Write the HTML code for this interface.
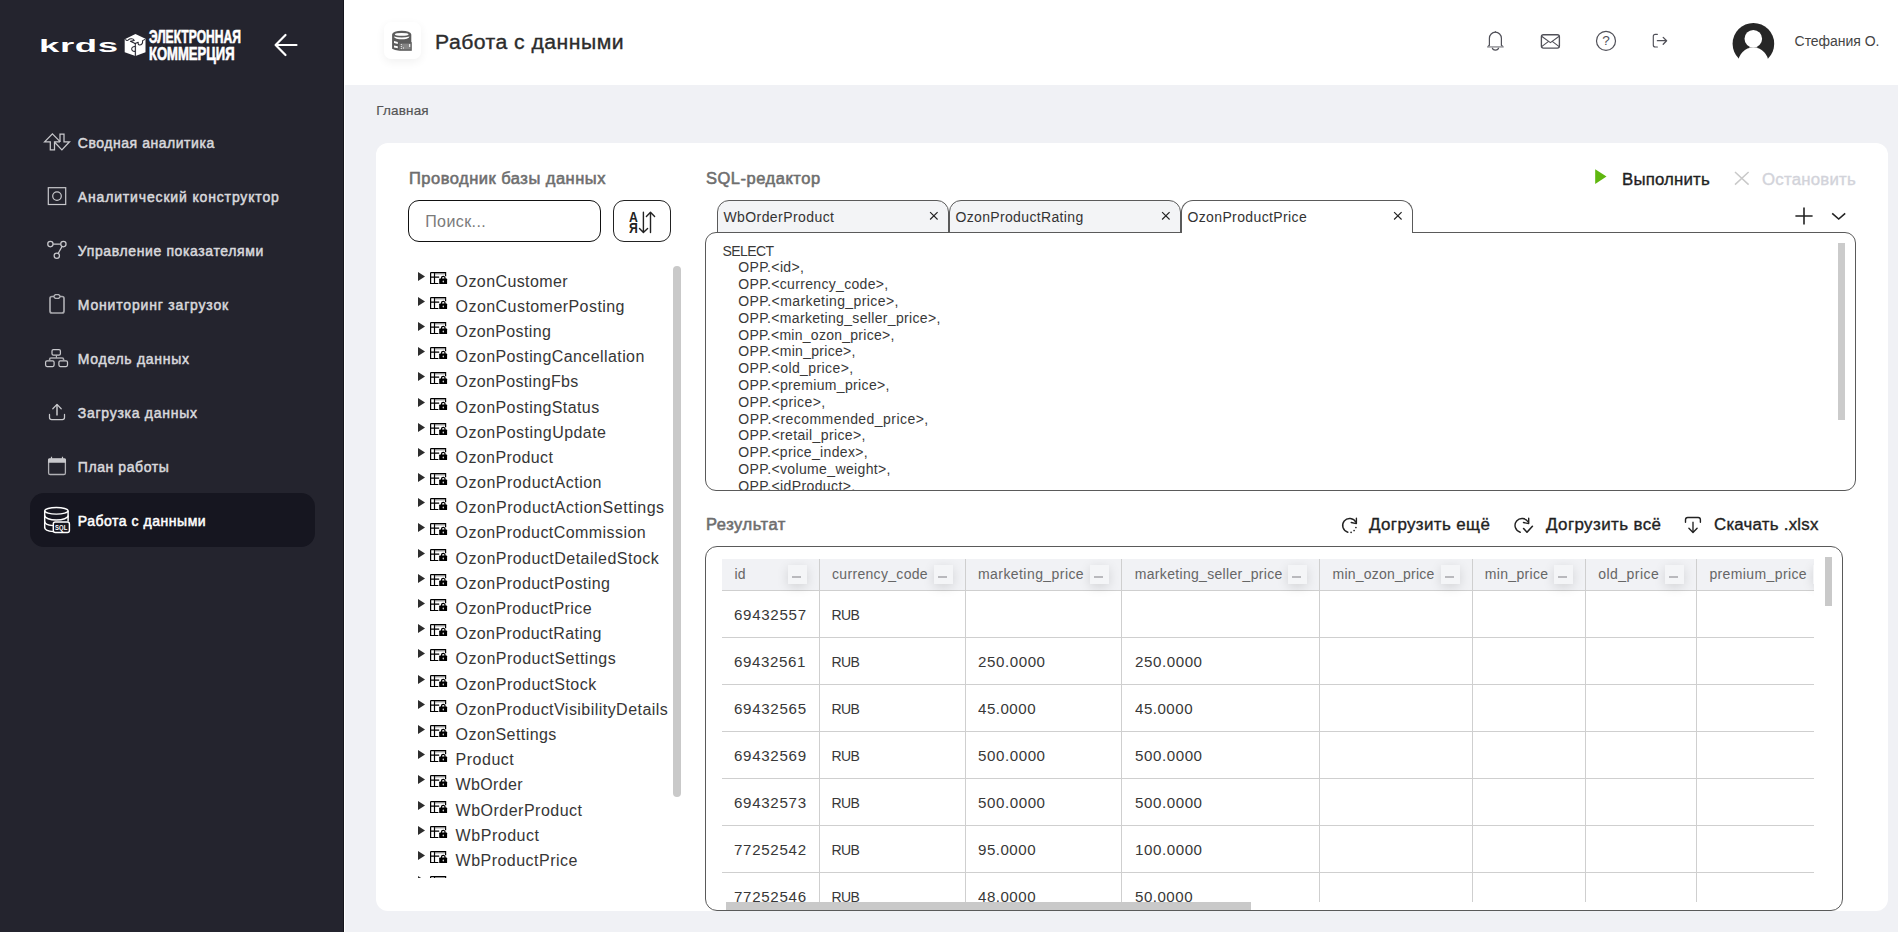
<!DOCTYPE html>
<html lang="ru"><head><meta charset="utf-8"><title>Работа с данными</title>
<style>
html,body{margin:0;padding:0;}
body{width:1898px;height:932px;overflow:hidden;position:relative;background:#f0f1f5;font-family:"Liberation Sans",sans-serif;}
.b{position:absolute;display:block;}
.t{position:absolute;white-space:pre;font-family:"Liberation Sans",sans-serif;}
</style></head>
<body>
<div class="b" style="left:344px;top:0px;width:1554px;height:85px;background:#fff;"></div>
<div class="b" style="left:384px;top:22px;width:36.5px;height:37px;background:#fff;border-radius:7px;box-shadow:0 3px 10px rgba(0,0,0,0.06);"></div>
<svg class="b" style="left:390px;top:29px;" width="24" height="24" viewBox="390 29 24 24"><path d="M392.1 34.4 A9.6 3.6 0 0 1 411.3 34.4 V43 H399.4 V50.7 Q394.4 50.4 392.1 48.7 Z" fill="#5c5c5c"/><ellipse cx="401.7" cy="34.4" rx="6.9" ry="1.45" fill="#fff"/><path d="M393.9 36.5 Q401.7 38.6 409.5 36.5 Q409.4 38 406.8 38.7 Q401.7 39.8 396.6 38.7 Q394 38 393.9 36.5Z" fill="#fff"/><path d="M394 41.1 L397.8 41.9 V43.9 L394 43.1Z M394 45.5 L397.8 46.3 V48.3 L394 47.5Z" fill="#fff"/><rect x="399.2" y="42.2" width="12.6" height="8.6" fill="#5c5c5c"/><rect x="400.6" y="43.6" width="10" height="5.8" fill="#858585"/><path d="M400.8 44 h0.9 v1 h-0.9z M400.8 46 h0.9 v1 h-0.9z M400.8 48 h0.9 v1 h-0.9z M409.2 44 h1 v3 h-1z M403 47.6 h1 v1 h-1z" fill="#fff"/></svg>
<span class="t" style="left:434.90px;top:28.67px;font-size:20px;line-height:26px;color:#2c2c2c;letter-spacing:0.439px;-webkit-text-stroke:0.35px #2c2c2c;transform-origin:0 50%;transform:scaleX(1.06);">Работа с данными</span>
<svg class="b" style="left:1484px;top:28px;" width="24" height="26" viewBox="1484 28 24 26"><g stroke="#505058" stroke-width="1.2" fill="none" stroke-linejoin="round"><path d="M1489.4 45.8 V38.2 A6 6 0 0 1 1501.4 38.2 V45.8"/><path d="M1489.4 45.2 L1487.9 46.6 M1501.4 45.2 L1502.9 46.6"/><path d="M1492.2 47.6 A3.3 3.1 0 0 0 1498.7 47.6"/><path d="M1495.4 32.4 V31.2" stroke-width="1.1"/></g><path d="M1487.1 46.2 H1503.7 V47.6 H1487.1Z" fill="#8e8e93"/></svg>
<svg class="b" style="left:1538px;top:31px;" width="25" height="21" viewBox="1538 31 25 21"><g stroke="#505058" stroke-width="1.35" fill="none" stroke-linejoin="round"><rect x="1541.4" y="34.7" width="18" height="13.4" rx="2"/><path d="M1541.6 36.2 L1550.4 42.6 L1559.2 36.2 M1541.6 46.6 L1548.6 41.4 M1559.2 46.6 L1552.2 41.4" stroke-width="1.15"/></g></svg>
<svg class="b" style="left:1594px;top:29px;" width="24" height="24" viewBox="1594 29 24 24"><circle cx="1606" cy="40.9" r="9.5" stroke="#505058" stroke-width="1.2" fill="none"/><text x="1606.1" y="45.3" font-family="Liberation Sans, sans-serif" font-size="13.6" fill="#505058" text-anchor="middle">?</text></svg>
<svg class="b" style="left:1650px;top:31px;" width="20" height="20" viewBox="1650 31 20 20"><g stroke="#505058" stroke-width="1.15" fill="none" stroke-linecap="round" stroke-linejoin="round"><path d="M1657.4 34.3 H1655.3 Q1653.3 34.3 1653.3 36.3 V45 Q1653.3 47 1655.3 47 H1657.4"/><path d="M1657.4 40.7 H1666.4 M1663.2 37.4 L1666.6 40.7 L1663.2 44.2" stroke-width="1.3"/></g></svg>
<svg class="b" style="left:1730px;top:20px;" width="48" height="60" viewBox="1730 20 48 60"><circle cx="1753.4" cy="43.7" r="20.8" fill="#262626"/><circle cx="1753.3" cy="38.7" r="8.8" fill="#fff"/><circle cx="1753.3" cy="62.6" r="15.1" fill="#fff"/><path d="M1749.6 47.4 H1757 L1757.8 47.9 H1748.8Z" fill="#fff"/></svg>
<span class="t" style="left:1794.60px;top:31.75px;font-size:14px;line-height:18px;color:#444;letter-spacing:-0.045px;">Стефания О.</span>
<div class="b" style="left:344px;top:85px;width:1554px;height:847px;background:#f0f1f5;"></div>
<span class="t" style="left:376.30px;top:101.52px;font-size:13.5px;line-height:18px;color:#555;letter-spacing:0.162px;-webkit-text-stroke:0.2px #555;">Главная</span>
<div class="b" style="left:376px;top:143px;width:1512px;height:768.4px;background:#fff;border-radius:12px;"></div>
<span class="t" style="left:408.60px;top:167.66px;font-size:16px;line-height:21px;color:#6e6e6e;letter-spacing:0.488px;-webkit-text-stroke:0.55px #6e6e6e;transform-origin:0 50%;transform:scaleX(1.03);">Проводник базы данных</span>
<div class="b" style="left:408px;top:200px;width:193px;height:42px;box-sizing:border-box;border:1.5px solid #111;border-radius:11px;background:#fff;"></div>
<span class="t" style="left:425.20px;top:210.66px;font-size:16px;line-height:21px;color:#7a7a7a;letter-spacing:0.410px;">Поиск...</span>
<div class="b" style="left:613px;top:200px;width:58px;height:42px;box-sizing:border-box;border:1px solid #222;border-radius:11px;background:#fff;"></div>
<span class="t" style="left:628.9px;top:208.5px;font-size:14.8px;line-height:16px;font-weight:700;color:#222;transform-origin:0 50%;transform:scaleX(0.83);">А</span>
<span class="t" style="left:628.6px;top:219.8px;font-size:14.8px;line-height:16px;font-weight:700;color:#222;transform-origin:0 50%;transform:scaleX(0.83);">Я</span>
<svg class="b" style="left:636px;top:208px;" width="22" height="28" viewBox="636 208 22 28"><g stroke="#222" stroke-width="1.4" fill="none" stroke-linecap="round" stroke-linejoin="round"><path d="M643.4 212.3 V232.4 M639.5 228.4 L643.4 232.5 L647.6 228.4"/><path d="M650.5 232.5 V212.4 M646.4 216.4 L650.5 212.2 L654.6 216.4"/></g></svg>
<div class="b" style="left:408px;top:262px;width:280px;height:616px;overflow:hidden;">
<svg class="b" style="left:9.899999999999977px;top:10px;" width="8" height="10" viewBox="0 0 8 10"><path d="M0 0 L7 4.45 L0 9 Z" fill="#2d2d2d"/></svg>
<svg class="b" style="left:21.899999999999977px;top:10px;" width="18" height="13" viewBox="0 0 18 13"><g fill="none" stroke="#000" stroke-width="1.2"><path d="M0.6 0.6 H15.6 V4.2 M0.6 0.6 V11.5 H8.4 M4.5 0.6 V11.5 M0.6 5.2 H9.2"/><path d="M4.5 1.9 H15.6" stroke-width="0.6" stroke="#444"/><path d="M11.5 7 V6.1 A1.75 1.75 0 0 1 15 6.1 V7" stroke-width="1.25"/></g><rect x="9.2" y="6.5" width="7.9" height="5.6" rx="0.7" fill="#000"/><rect x="12.65" y="8.5" width="1.2" height="1.9" rx="0.6" fill="#fff"/></svg>
<span class="t" style="left:47.60px;top:8.86px;font-size:16px;line-height:21px;color:#363636;letter-spacing:0.405px;">OzonCustomer</span>
<svg class="b" style="left:9.899999999999977px;top:35px;" width="8" height="10" viewBox="0 0 8 10"><path d="M0 0 L7 4.45 L0 9 Z" fill="#2d2d2d"/></svg>
<svg class="b" style="left:21.899999999999977px;top:35px;" width="18" height="13" viewBox="0 0 18 13"><g fill="none" stroke="#000" stroke-width="1.2"><path d="M0.6 0.6 H15.6 V4.2 M0.6 0.6 V11.5 H8.4 M4.5 0.6 V11.5 M0.6 5.2 H9.2"/><path d="M4.5 1.9 H15.6" stroke-width="0.6" stroke="#444"/><path d="M11.5 7 V6.1 A1.75 1.75 0 0 1 15 6.1 V7" stroke-width="1.25"/></g><rect x="9.2" y="6.5" width="7.9" height="5.6" rx="0.7" fill="#000"/><rect x="12.65" y="8.5" width="1.2" height="1.9" rx="0.6" fill="#fff"/></svg>
<span class="t" style="left:47.60px;top:33.86px;font-size:16px;line-height:21px;color:#363636;letter-spacing:0.442px;">OzonCustomerPosting</span>
<svg class="b" style="left:9.899999999999977px;top:60px;" width="8" height="10" viewBox="0 0 8 10"><path d="M0 0 L7 4.45 L0 9 Z" fill="#2d2d2d"/></svg>
<svg class="b" style="left:21.899999999999977px;top:60px;" width="18" height="13" viewBox="0 0 18 13"><g fill="none" stroke="#000" stroke-width="1.2"><path d="M0.6 0.6 H15.6 V4.2 M0.6 0.6 V11.5 H8.4 M4.5 0.6 V11.5 M0.6 5.2 H9.2"/><path d="M4.5 1.9 H15.6" stroke-width="0.6" stroke="#444"/><path d="M11.5 7 V6.1 A1.75 1.75 0 0 1 15 6.1 V7" stroke-width="1.25"/></g><rect x="9.2" y="6.5" width="7.9" height="5.6" rx="0.7" fill="#000"/><rect x="12.65" y="8.5" width="1.2" height="1.9" rx="0.6" fill="#fff"/></svg>
<span class="t" style="left:47.60px;top:58.86px;font-size:16px;line-height:21px;color:#363636;letter-spacing:0.361px;">OzonPosting</span>
<svg class="b" style="left:9.899999999999977px;top:85px;" width="8" height="10" viewBox="0 0 8 10"><path d="M0 0 L7 4.45 L0 9 Z" fill="#2d2d2d"/></svg>
<svg class="b" style="left:21.899999999999977px;top:85px;" width="18" height="13" viewBox="0 0 18 13"><g fill="none" stroke="#000" stroke-width="1.2"><path d="M0.6 0.6 H15.6 V4.2 M0.6 0.6 V11.5 H8.4 M4.5 0.6 V11.5 M0.6 5.2 H9.2"/><path d="M4.5 1.9 H15.6" stroke-width="0.6" stroke="#444"/><path d="M11.5 7 V6.1 A1.75 1.75 0 0 1 15 6.1 V7" stroke-width="1.25"/></g><rect x="9.2" y="6.5" width="7.9" height="5.6" rx="0.7" fill="#000"/><rect x="12.65" y="8.5" width="1.2" height="1.9" rx="0.6" fill="#fff"/></svg>
<span class="t" style="left:47.60px;top:83.86px;font-size:16px;line-height:21px;color:#363636;letter-spacing:0.411px;">OzonPostingCancellation</span>
<svg class="b" style="left:9.899999999999977px;top:110px;" width="8" height="10" viewBox="0 0 8 10"><path d="M0 0 L7 4.45 L0 9 Z" fill="#2d2d2d"/></svg>
<svg class="b" style="left:21.899999999999977px;top:110px;" width="18" height="13" viewBox="0 0 18 13"><g fill="none" stroke="#000" stroke-width="1.2"><path d="M0.6 0.6 H15.6 V4.2 M0.6 0.6 V11.5 H8.4 M4.5 0.6 V11.5 M0.6 5.2 H9.2"/><path d="M4.5 1.9 H15.6" stroke-width="0.6" stroke="#444"/><path d="M11.5 7 V6.1 A1.75 1.75 0 0 1 15 6.1 V7" stroke-width="1.25"/></g><rect x="9.2" y="6.5" width="7.9" height="5.6" rx="0.7" fill="#000"/><rect x="12.65" y="8.5" width="1.2" height="1.9" rx="0.6" fill="#fff"/></svg>
<span class="t" style="left:47.60px;top:108.86px;font-size:16px;line-height:21px;color:#363636;letter-spacing:0.340px;">OzonPostingFbs</span>
<svg class="b" style="left:9.899999999999977px;top:136px;" width="8" height="10" viewBox="0 0 8 10"><path d="M0 0 L7 4.45 L0 9 Z" fill="#2d2d2d"/></svg>
<svg class="b" style="left:21.899999999999977px;top:136px;" width="18" height="13" viewBox="0 0 18 13"><g fill="none" stroke="#000" stroke-width="1.2"><path d="M0.6 0.6 H15.6 V4.2 M0.6 0.6 V11.5 H8.4 M4.5 0.6 V11.5 M0.6 5.2 H9.2"/><path d="M4.5 1.9 H15.6" stroke-width="0.6" stroke="#444"/><path d="M11.5 7 V6.1 A1.75 1.75 0 0 1 15 6.1 V7" stroke-width="1.25"/></g><rect x="9.2" y="6.5" width="7.9" height="5.6" rx="0.7" fill="#000"/><rect x="12.65" y="8.5" width="1.2" height="1.9" rx="0.6" fill="#fff"/></svg>
<span class="t" style="left:47.60px;top:134.86px;font-size:16px;line-height:21px;color:#363636;letter-spacing:0.414px;">OzonPostingStatus</span>
<svg class="b" style="left:9.899999999999977px;top:161px;" width="8" height="10" viewBox="0 0 8 10"><path d="M0 0 L7 4.45 L0 9 Z" fill="#2d2d2d"/></svg>
<svg class="b" style="left:21.899999999999977px;top:161px;" width="18" height="13" viewBox="0 0 18 13"><g fill="none" stroke="#000" stroke-width="1.2"><path d="M0.6 0.6 H15.6 V4.2 M0.6 0.6 V11.5 H8.4 M4.5 0.6 V11.5 M0.6 5.2 H9.2"/><path d="M4.5 1.9 H15.6" stroke-width="0.6" stroke="#444"/><path d="M11.5 7 V6.1 A1.75 1.75 0 0 1 15 6.1 V7" stroke-width="1.25"/></g><rect x="9.2" y="6.5" width="7.9" height="5.6" rx="0.7" fill="#000"/><rect x="12.65" y="8.5" width="1.2" height="1.9" rx="0.6" fill="#fff"/></svg>
<span class="t" style="left:47.60px;top:159.86px;font-size:16px;line-height:21px;color:#363636;letter-spacing:0.451px;">OzonPostingUpdate</span>
<svg class="b" style="left:9.899999999999977px;top:186px;" width="8" height="10" viewBox="0 0 8 10"><path d="M0 0 L7 4.45 L0 9 Z" fill="#2d2d2d"/></svg>
<svg class="b" style="left:21.899999999999977px;top:186px;" width="18" height="13" viewBox="0 0 18 13"><g fill="none" stroke="#000" stroke-width="1.2"><path d="M0.6 0.6 H15.6 V4.2 M0.6 0.6 V11.5 H8.4 M4.5 0.6 V11.5 M0.6 5.2 H9.2"/><path d="M4.5 1.9 H15.6" stroke-width="0.6" stroke="#444"/><path d="M11.5 7 V6.1 A1.75 1.75 0 0 1 15 6.1 V7" stroke-width="1.25"/></g><rect x="9.2" y="6.5" width="7.9" height="5.6" rx="0.7" fill="#000"/><rect x="12.65" y="8.5" width="1.2" height="1.9" rx="0.6" fill="#fff"/></svg>
<span class="t" style="left:47.60px;top:184.86px;font-size:16px;line-height:21px;color:#363636;letter-spacing:0.395px;">OzonProduct</span>
<svg class="b" style="left:9.899999999999977px;top:211px;" width="8" height="10" viewBox="0 0 8 10"><path d="M0 0 L7 4.45 L0 9 Z" fill="#2d2d2d"/></svg>
<svg class="b" style="left:21.899999999999977px;top:211px;" width="18" height="13" viewBox="0 0 18 13"><g fill="none" stroke="#000" stroke-width="1.2"><path d="M0.6 0.6 H15.6 V4.2 M0.6 0.6 V11.5 H8.4 M4.5 0.6 V11.5 M0.6 5.2 H9.2"/><path d="M4.5 1.9 H15.6" stroke-width="0.6" stroke="#444"/><path d="M11.5 7 V6.1 A1.75 1.75 0 0 1 15 6.1 V7" stroke-width="1.25"/></g><rect x="9.2" y="6.5" width="7.9" height="5.6" rx="0.7" fill="#000"/><rect x="12.65" y="8.5" width="1.2" height="1.9" rx="0.6" fill="#fff"/></svg>
<span class="t" style="left:47.60px;top:209.86px;font-size:16px;line-height:21px;color:#363636;letter-spacing:0.504px;">OzonProductAction</span>
<svg class="b" style="left:9.899999999999977px;top:236px;" width="8" height="10" viewBox="0 0 8 10"><path d="M0 0 L7 4.45 L0 9 Z" fill="#2d2d2d"/></svg>
<svg class="b" style="left:21.899999999999977px;top:236px;" width="18" height="13" viewBox="0 0 18 13"><g fill="none" stroke="#000" stroke-width="1.2"><path d="M0.6 0.6 H15.6 V4.2 M0.6 0.6 V11.5 H8.4 M4.5 0.6 V11.5 M0.6 5.2 H9.2"/><path d="M4.5 1.9 H15.6" stroke-width="0.6" stroke="#444"/><path d="M11.5 7 V6.1 A1.75 1.75 0 0 1 15 6.1 V7" stroke-width="1.25"/></g><rect x="9.2" y="6.5" width="7.9" height="5.6" rx="0.7" fill="#000"/><rect x="12.65" y="8.5" width="1.2" height="1.9" rx="0.6" fill="#fff"/></svg>
<span class="t" style="left:47.60px;top:234.86px;font-size:16px;line-height:21px;color:#363636;letter-spacing:0.535px;">OzonProductActionSettings</span>
<svg class="b" style="left:9.899999999999977px;top:261px;" width="8" height="10" viewBox="0 0 8 10"><path d="M0 0 L7 4.45 L0 9 Z" fill="#2d2d2d"/></svg>
<svg class="b" style="left:21.899999999999977px;top:261px;" width="18" height="13" viewBox="0 0 18 13"><g fill="none" stroke="#000" stroke-width="1.2"><path d="M0.6 0.6 H15.6 V4.2 M0.6 0.6 V11.5 H8.4 M4.5 0.6 V11.5 M0.6 5.2 H9.2"/><path d="M4.5 1.9 H15.6" stroke-width="0.6" stroke="#444"/><path d="M11.5 7 V6.1 A1.75 1.75 0 0 1 15 6.1 V7" stroke-width="1.25"/></g><rect x="9.2" y="6.5" width="7.9" height="5.6" rx="0.7" fill="#000"/><rect x="12.65" y="8.5" width="1.2" height="1.9" rx="0.6" fill="#fff"/></svg>
<span class="t" style="left:47.60px;top:259.86px;font-size:16px;line-height:21px;color:#363636;letter-spacing:0.431px;">OzonProductCommission</span>
<svg class="b" style="left:9.899999999999977px;top:287px;" width="8" height="10" viewBox="0 0 8 10"><path d="M0 0 L7 4.45 L0 9 Z" fill="#2d2d2d"/></svg>
<svg class="b" style="left:21.899999999999977px;top:287px;" width="18" height="13" viewBox="0 0 18 13"><g fill="none" stroke="#000" stroke-width="1.2"><path d="M0.6 0.6 H15.6 V4.2 M0.6 0.6 V11.5 H8.4 M4.5 0.6 V11.5 M0.6 5.2 H9.2"/><path d="M4.5 1.9 H15.6" stroke-width="0.6" stroke="#444"/><path d="M11.5 7 V6.1 A1.75 1.75 0 0 1 15 6.1 V7" stroke-width="1.25"/></g><rect x="9.2" y="6.5" width="7.9" height="5.6" rx="0.7" fill="#000"/><rect x="12.65" y="8.5" width="1.2" height="1.9" rx="0.6" fill="#fff"/></svg>
<span class="t" style="left:47.60px;top:285.86px;font-size:16px;line-height:21px;color:#363636;letter-spacing:0.481px;">OzonProductDetailedStock</span>
<svg class="b" style="left:9.899999999999977px;top:312px;" width="8" height="10" viewBox="0 0 8 10"><path d="M0 0 L7 4.45 L0 9 Z" fill="#2d2d2d"/></svg>
<svg class="b" style="left:21.899999999999977px;top:312px;" width="18" height="13" viewBox="0 0 18 13"><g fill="none" stroke="#000" stroke-width="1.2"><path d="M0.6 0.6 H15.6 V4.2 M0.6 0.6 V11.5 H8.4 M4.5 0.6 V11.5 M0.6 5.2 H9.2"/><path d="M4.5 1.9 H15.6" stroke-width="0.6" stroke="#444"/><path d="M11.5 7 V6.1 A1.75 1.75 0 0 1 15 6.1 V7" stroke-width="1.25"/></g><rect x="9.2" y="6.5" width="7.9" height="5.6" rx="0.7" fill="#000"/><rect x="12.65" y="8.5" width="1.2" height="1.9" rx="0.6" fill="#fff"/></svg>
<span class="t" style="left:47.60px;top:310.86px;font-size:16px;line-height:21px;color:#363636;letter-spacing:0.451px;">OzonProductPosting</span>
<svg class="b" style="left:9.899999999999977px;top:337px;" width="8" height="10" viewBox="0 0 8 10"><path d="M0 0 L7 4.45 L0 9 Z" fill="#2d2d2d"/></svg>
<svg class="b" style="left:21.899999999999977px;top:337px;" width="18" height="13" viewBox="0 0 18 13"><g fill="none" stroke="#000" stroke-width="1.2"><path d="M0.6 0.6 H15.6 V4.2 M0.6 0.6 V11.5 H8.4 M4.5 0.6 V11.5 M0.6 5.2 H9.2"/><path d="M4.5 1.9 H15.6" stroke-width="0.6" stroke="#444"/><path d="M11.5 7 V6.1 A1.75 1.75 0 0 1 15 6.1 V7" stroke-width="1.25"/></g><rect x="9.2" y="6.5" width="7.9" height="5.6" rx="0.7" fill="#000"/><rect x="12.65" y="8.5" width="1.2" height="1.9" rx="0.6" fill="#fff"/></svg>
<span class="t" style="left:47.60px;top:335.86px;font-size:16px;line-height:21px;color:#363636;letter-spacing:0.412px;">OzonProductPrice</span>
<svg class="b" style="left:9.899999999999977px;top:362px;" width="8" height="10" viewBox="0 0 8 10"><path d="M0 0 L7 4.45 L0 9 Z" fill="#2d2d2d"/></svg>
<svg class="b" style="left:21.899999999999977px;top:362px;" width="18" height="13" viewBox="0 0 18 13"><g fill="none" stroke="#000" stroke-width="1.2"><path d="M0.6 0.6 H15.6 V4.2 M0.6 0.6 V11.5 H8.4 M4.5 0.6 V11.5 M0.6 5.2 H9.2"/><path d="M4.5 1.9 H15.6" stroke-width="0.6" stroke="#444"/><path d="M11.5 7 V6.1 A1.75 1.75 0 0 1 15 6.1 V7" stroke-width="1.25"/></g><rect x="9.2" y="6.5" width="7.9" height="5.6" rx="0.7" fill="#000"/><rect x="12.65" y="8.5" width="1.2" height="1.9" rx="0.6" fill="#fff"/></svg>
<span class="t" style="left:47.60px;top:360.86px;font-size:16px;line-height:21px;color:#363636;letter-spacing:0.393px;">OzonProductRating</span>
<svg class="b" style="left:9.899999999999977px;top:387px;" width="8" height="10" viewBox="0 0 8 10"><path d="M0 0 L7 4.45 L0 9 Z" fill="#2d2d2d"/></svg>
<svg class="b" style="left:21.899999999999977px;top:387px;" width="18" height="13" viewBox="0 0 18 13"><g fill="none" stroke="#000" stroke-width="1.2"><path d="M0.6 0.6 H15.6 V4.2 M0.6 0.6 V11.5 H8.4 M4.5 0.6 V11.5 M0.6 5.2 H9.2"/><path d="M4.5 1.9 H15.6" stroke-width="0.6" stroke="#444"/><path d="M11.5 7 V6.1 A1.75 1.75 0 0 1 15 6.1 V7" stroke-width="1.25"/></g><rect x="9.2" y="6.5" width="7.9" height="5.6" rx="0.7" fill="#000"/><rect x="12.65" y="8.5" width="1.2" height="1.9" rx="0.6" fill="#fff"/></svg>
<span class="t" style="left:47.60px;top:385.86px;font-size:16px;line-height:21px;color:#363636;letter-spacing:0.494px;">OzonProductSettings</span>
<svg class="b" style="left:9.899999999999977px;top:413px;" width="8" height="10" viewBox="0 0 8 10"><path d="M0 0 L7 4.45 L0 9 Z" fill="#2d2d2d"/></svg>
<svg class="b" style="left:21.899999999999977px;top:413px;" width="18" height="13" viewBox="0 0 18 13"><g fill="none" stroke="#000" stroke-width="1.2"><path d="M0.6 0.6 H15.6 V4.2 M0.6 0.6 V11.5 H8.4 M4.5 0.6 V11.5 M0.6 5.2 H9.2"/><path d="M4.5 1.9 H15.6" stroke-width="0.6" stroke="#444"/><path d="M11.5 7 V6.1 A1.75 1.75 0 0 1 15 6.1 V7" stroke-width="1.25"/></g><rect x="9.2" y="6.5" width="7.9" height="5.6" rx="0.7" fill="#000"/><rect x="12.65" y="8.5" width="1.2" height="1.9" rx="0.6" fill="#fff"/></svg>
<span class="t" style="left:47.60px;top:411.86px;font-size:16px;line-height:21px;color:#363636;letter-spacing:0.478px;">OzonProductStock</span>
<svg class="b" style="left:9.899999999999977px;top:438px;" width="8" height="10" viewBox="0 0 8 10"><path d="M0 0 L7 4.45 L0 9 Z" fill="#2d2d2d"/></svg>
<svg class="b" style="left:21.899999999999977px;top:438px;" width="18" height="13" viewBox="0 0 18 13"><g fill="none" stroke="#000" stroke-width="1.2"><path d="M0.6 0.6 H15.6 V4.2 M0.6 0.6 V11.5 H8.4 M4.5 0.6 V11.5 M0.6 5.2 H9.2"/><path d="M4.5 1.9 H15.6" stroke-width="0.6" stroke="#444"/><path d="M11.5 7 V6.1 A1.75 1.75 0 0 1 15 6.1 V7" stroke-width="1.25"/></g><rect x="9.2" y="6.5" width="7.9" height="5.6" rx="0.7" fill="#000"/><rect x="12.65" y="8.5" width="1.2" height="1.9" rx="0.6" fill="#fff"/></svg>
<span class="t" style="left:47.60px;top:436.86px;font-size:16px;line-height:21px;color:#363636;letter-spacing:0.459px;">OzonProductVisibilityDetails</span>
<svg class="b" style="left:9.899999999999977px;top:463px;" width="8" height="10" viewBox="0 0 8 10"><path d="M0 0 L7 4.45 L0 9 Z" fill="#2d2d2d"/></svg>
<svg class="b" style="left:21.899999999999977px;top:463px;" width="18" height="13" viewBox="0 0 18 13"><g fill="none" stroke="#000" stroke-width="1.2"><path d="M0.6 0.6 H15.6 V4.2 M0.6 0.6 V11.5 H8.4 M4.5 0.6 V11.5 M0.6 5.2 H9.2"/><path d="M4.5 1.9 H15.6" stroke-width="0.6" stroke="#444"/><path d="M11.5 7 V6.1 A1.75 1.75 0 0 1 15 6.1 V7" stroke-width="1.25"/></g><rect x="9.2" y="6.5" width="7.9" height="5.6" rx="0.7" fill="#000"/><rect x="12.65" y="8.5" width="1.2" height="1.9" rx="0.6" fill="#fff"/></svg>
<span class="t" style="left:47.60px;top:461.86px;font-size:16px;line-height:21px;color:#363636;letter-spacing:0.422px;">OzonSettings</span>
<svg class="b" style="left:9.899999999999977px;top:488px;" width="8" height="10" viewBox="0 0 8 10"><path d="M0 0 L7 4.45 L0 9 Z" fill="#2d2d2d"/></svg>
<svg class="b" style="left:21.899999999999977px;top:488px;" width="18" height="13" viewBox="0 0 18 13"><g fill="none" stroke="#000" stroke-width="1.2"><path d="M0.6 0.6 H15.6 V4.2 M0.6 0.6 V11.5 H8.4 M4.5 0.6 V11.5 M0.6 5.2 H9.2"/><path d="M4.5 1.9 H15.6" stroke-width="0.6" stroke="#444"/><path d="M11.5 7 V6.1 A1.75 1.75 0 0 1 15 6.1 V7" stroke-width="1.25"/></g><rect x="9.2" y="6.5" width="7.9" height="5.6" rx="0.7" fill="#000"/><rect x="12.65" y="8.5" width="1.2" height="1.9" rx="0.6" fill="#fff"/></svg>
<span class="t" style="left:47.60px;top:486.86px;font-size:16px;line-height:21px;color:#363636;letter-spacing:0.501px;">Product</span>
<svg class="b" style="left:9.899999999999977px;top:513px;" width="8" height="10" viewBox="0 0 8 10"><path d="M0 0 L7 4.45 L0 9 Z" fill="#2d2d2d"/></svg>
<svg class="b" style="left:21.899999999999977px;top:513px;" width="18" height="13" viewBox="0 0 18 13"><g fill="none" stroke="#000" stroke-width="1.2"><path d="M0.6 0.6 H15.6 V4.2 M0.6 0.6 V11.5 H8.4 M4.5 0.6 V11.5 M0.6 5.2 H9.2"/><path d="M4.5 1.9 H15.6" stroke-width="0.6" stroke="#444"/><path d="M11.5 7 V6.1 A1.75 1.75 0 0 1 15 6.1 V7" stroke-width="1.25"/></g><rect x="9.2" y="6.5" width="7.9" height="5.6" rx="0.7" fill="#000"/><rect x="12.65" y="8.5" width="1.2" height="1.9" rx="0.6" fill="#fff"/></svg>
<span class="t" style="left:47.60px;top:511.86px;font-size:16px;line-height:21px;color:#363636;letter-spacing:0.358px;">WbOrder</span>
<svg class="b" style="left:9.899999999999977px;top:539px;" width="8" height="10" viewBox="0 0 8 10"><path d="M0 0 L7 4.45 L0 9 Z" fill="#2d2d2d"/></svg>
<svg class="b" style="left:21.899999999999977px;top:539px;" width="18" height="13" viewBox="0 0 18 13"><g fill="none" stroke="#000" stroke-width="1.2"><path d="M0.6 0.6 H15.6 V4.2 M0.6 0.6 V11.5 H8.4 M4.5 0.6 V11.5 M0.6 5.2 H9.2"/><path d="M4.5 1.9 H15.6" stroke-width="0.6" stroke="#444"/><path d="M11.5 7 V6.1 A1.75 1.75 0 0 1 15 6.1 V7" stroke-width="1.25"/></g><rect x="9.2" y="6.5" width="7.9" height="5.6" rx="0.7" fill="#000"/><rect x="12.65" y="8.5" width="1.2" height="1.9" rx="0.6" fill="#fff"/></svg>
<span class="t" style="left:47.60px;top:537.86px;font-size:16px;line-height:21px;color:#363636;letter-spacing:0.492px;">WbOrderProduct</span>
<svg class="b" style="left:9.899999999999977px;top:564px;" width="8" height="10" viewBox="0 0 8 10"><path d="M0 0 L7 4.45 L0 9 Z" fill="#2d2d2d"/></svg>
<svg class="b" style="left:21.899999999999977px;top:564px;" width="18" height="13" viewBox="0 0 18 13"><g fill="none" stroke="#000" stroke-width="1.2"><path d="M0.6 0.6 H15.6 V4.2 M0.6 0.6 V11.5 H8.4 M4.5 0.6 V11.5 M0.6 5.2 H9.2"/><path d="M4.5 1.9 H15.6" stroke-width="0.6" stroke="#444"/><path d="M11.5 7 V6.1 A1.75 1.75 0 0 1 15 6.1 V7" stroke-width="1.25"/></g><rect x="9.2" y="6.5" width="7.9" height="5.6" rx="0.7" fill="#000"/><rect x="12.65" y="8.5" width="1.2" height="1.9" rx="0.6" fill="#fff"/></svg>
<span class="t" style="left:47.60px;top:562.86px;font-size:16px;line-height:21px;color:#363636;letter-spacing:0.538px;">WbProduct</span>
<svg class="b" style="left:9.899999999999977px;top:589px;" width="8" height="10" viewBox="0 0 8 10"><path d="M0 0 L7 4.45 L0 9 Z" fill="#2d2d2d"/></svg>
<svg class="b" style="left:21.899999999999977px;top:589px;" width="18" height="13" viewBox="0 0 18 13"><g fill="none" stroke="#000" stroke-width="1.2"><path d="M0.6 0.6 H15.6 V4.2 M0.6 0.6 V11.5 H8.4 M4.5 0.6 V11.5 M0.6 5.2 H9.2"/><path d="M4.5 1.9 H15.6" stroke-width="0.6" stroke="#444"/><path d="M11.5 7 V6.1 A1.75 1.75 0 0 1 15 6.1 V7" stroke-width="1.25"/></g><rect x="9.2" y="6.5" width="7.9" height="5.6" rx="0.7" fill="#000"/><rect x="12.65" y="8.5" width="1.2" height="1.9" rx="0.6" fill="#fff"/></svg>
<span class="t" style="left:47.60px;top:587.86px;font-size:16px;line-height:21px;color:#363636;letter-spacing:0.472px;">WbProductPrice</span>
<svg class="b" style="left:9.899999999999977px;top:614px;" width="8" height="10" viewBox="0 0 8 10"><path d="M0 0 L7 4.45 L0 9 Z" fill="#2d2d2d"/></svg>
<svg class="b" style="left:21.899999999999977px;top:614px;" width="18" height="13" viewBox="0 0 18 13"><g fill="none" stroke="#000" stroke-width="1.2"><path d="M0.6 0.6 H15.6 V4.2 M0.6 0.6 V11.5 H8.4 M4.5 0.6 V11.5 M0.6 5.2 H9.2"/><path d="M4.5 1.9 H15.6" stroke-width="0.6" stroke="#444"/><path d="M11.5 7 V6.1 A1.75 1.75 0 0 1 15 6.1 V7" stroke-width="1.25"/></g><rect x="9.2" y="6.5" width="7.9" height="5.6" rx="0.7" fill="#000"/><rect x="12.65" y="8.5" width="1.2" height="1.9" rx="0.6" fill="#fff"/></svg>
</div>
<div class="b" style="left:673px;top:265.8px;width:8px;height:531px;background:#c9c9c9;border-radius:4px;"></div>
<span class="t" style="left:705.50px;top:167.66px;font-size:16px;line-height:21px;color:#6e6e6e;letter-spacing:0.513px;-webkit-text-stroke:0.55px #6e6e6e;transform-origin:0 50%;transform:scaleX(1.03);">SQL-редактор</span>
<svg class="b" style="left:1594.5px;top:169px;" width="12" height="16" viewBox="0 0 12 16"><path d="M0.2 0.3 L11.5 7.6 L0.2 15 Z" fill="#5fb70f"/></svg>
<span class="t" style="left:1622.30px;top:168.56px;font-size:16px;line-height:21px;color:#1f1f1f;letter-spacing:0.166px;-webkit-text-stroke:0.35px #1f1f1f;transform-origin:0 50%;transform:scaleX(1.05);">Выполнить</span>
<svg class="b" style="left:1733.5px;top:171px;" width="16" height="15" viewBox="0 0 16 15"><path d="M1 1 L14.6 13.6 M14.6 1 L1 13.6" stroke="#c9c9c9" stroke-width="1.5" fill="none"/></svg>
<span class="t" style="left:1761.80px;top:168.56px;font-size:16px;line-height:21px;color:#d2d3da;letter-spacing:0.218px;-webkit-text-stroke:0.35px #d2d3da;transform-origin:0 50%;transform:scaleX(1.05);">Остановить</span>
<div class="b" style="left:717px;top:200px;width:232px;height:33px;box-sizing:border-box;border:1px solid #5a5a5a;border-bottom:1px solid #5a5a5a;border-radius:12px 12px 0 0;background:#f3f4f6;"></div>
<div class="b" style="left:949px;top:200px;width:232px;height:33px;box-sizing:border-box;border:1px solid #5a5a5a;border-bottom:1px solid #5a5a5a;border-radius:12px 12px 0 0;background:#f3f4f6;"></div>
<div class="b" style="left:1181px;top:200px;width:232px;height:33px;box-sizing:border-box;border:1px solid #5a5a5a;border-bottom:1px solid #fff;border-radius:12px 12px 0 0;background:#fff;"></div>
<div class="b" style="left:705px;top:232px;width:1151px;height:259px;box-sizing:border-box;border:1px solid #5a5a5a;border-radius:11px;background:#fff;"></div>
<div class="b" style="left:1182px;top:231px;width:230px;height:3px;background:#fff;"></div>
<span class="t" style="left:723.40px;top:208.15px;font-size:14px;line-height:18px;color:#333;letter-spacing:0.428px;">WbOrderProduct</span>
<svg class="b" style="left:928.5px;top:211px;" width="10" height="10" viewBox="0 0 10 10"><path d="M1.1 1.2 L8.6 8.5 M8.6 1.2 L1.1 8.5" stroke="#222" stroke-width="1.15" fill="none"/></svg>
<span class="t" style="left:955.40px;top:208.15px;font-size:14px;line-height:18px;color:#333;letter-spacing:0.353px;">OzonProductRating</span>
<svg class="b" style="left:1160.5px;top:211px;" width="10" height="10" viewBox="0 0 10 10"><path d="M1.1 1.2 L8.6 8.5 M8.6 1.2 L1.1 8.5" stroke="#222" stroke-width="1.15" fill="none"/></svg>
<span class="t" style="left:1187.40px;top:208.15px;font-size:14px;line-height:18px;color:#333;letter-spacing:0.382px;">OzonProductPrice</span>
<svg class="b" style="left:1392.5px;top:211px;" width="10" height="10" viewBox="0 0 10 10"><path d="M1.1 1.2 L8.6 8.5 M8.6 1.2 L1.1 8.5" stroke="#222" stroke-width="1.15" fill="none"/></svg>
<svg class="b" style="left:1795px;top:207px;" width="18" height="18" viewBox="0 0 18 18"><path d="M9 0.4 V17.6 M0.4 9 H17.6" stroke="#222" stroke-width="1.6" fill="none"/></svg>
<svg class="b" style="left:1831px;top:211.5px;" width="16" height="9" viewBox="0 0 16 9"><path d="M1.2 1.4 L7.7 7 L14.2 1.4" stroke="#222" stroke-width="1.6" fill="none"/></svg>
<div class="b" style="left:706px;top:233px;width:1130px;height:256.5px;overflow:hidden;">
<span class="t" style="left:16.50px;top:9.05px;font-size:14px;line-height:18px;color:#383838;letter-spacing:-0.563px;">SELECT</span>
<span class="t" style="left:32.30px;top:25.05px;font-size:14px;line-height:18px;color:#383838;letter-spacing:0.352px;">OPP.&lt;id&gt;,</span>
<span class="t" style="left:32.30px;top:42.05px;font-size:14px;line-height:18px;color:#383838;letter-spacing:0.326px;">OPP.&lt;currency_code&gt;,</span>
<span class="t" style="left:32.30px;top:59.05px;font-size:14px;line-height:18px;color:#383838;letter-spacing:0.410px;">OPP.&lt;marketing_price&gt;,</span>
<span class="t" style="left:32.30px;top:76.05px;font-size:14px;line-height:18px;color:#383838;letter-spacing:0.331px;">OPP.&lt;marketing_seller_price&gt;,</span>
<span class="t" style="left:32.30px;top:93.05px;font-size:14px;line-height:18px;color:#383838;letter-spacing:0.264px;">OPP.&lt;min_ozon_price&gt;,</span>
<span class="t" style="left:32.30px;top:109.05px;font-size:14px;line-height:18px;color:#383838;letter-spacing:0.308px;">OPP.&lt;min_price&gt;,</span>
<span class="t" style="left:32.30px;top:126.05px;font-size:14px;line-height:18px;color:#383838;letter-spacing:0.413px;">OPP.&lt;old_price&gt;,</span>
<span class="t" style="left:32.30px;top:143.05px;font-size:14px;line-height:18px;color:#383838;letter-spacing:0.354px;">OPP.&lt;premium_price&gt;,</span>
<span class="t" style="left:32.30px;top:160.05px;font-size:14px;line-height:18px;color:#383838;letter-spacing:0.424px;">OPP.&lt;price&gt;,</span>
<span class="t" style="left:32.30px;top:177.05px;font-size:14px;line-height:18px;color:#383838;letter-spacing:0.452px;">OPP.&lt;recommended_price&gt;,</span>
<span class="t" style="left:32.30px;top:193.05px;font-size:14px;line-height:18px;color:#383838;letter-spacing:0.374px;">OPP.&lt;retail_price&gt;,</span>
<span class="t" style="left:32.30px;top:210.05px;font-size:14px;line-height:18px;color:#383838;letter-spacing:0.348px;">OPP.&lt;price_index&gt;,</span>
<span class="t" style="left:32.30px;top:227.05px;font-size:14px;line-height:18px;color:#383838;letter-spacing:0.365px;">OPP.&lt;volume_weight&gt;,</span>
<span class="t" style="left:32.30px;top:244.05px;font-size:14px;line-height:18px;color:#383838;letter-spacing:0.385px;">OPP.&lt;idProduct&gt;,</span>
</div>
<div class="b" style="left:1837.5px;top:243px;width:7.5px;height:176.5px;background:#cbcbcb;"></div>
<span class="t" style="left:705.50px;top:513.96px;font-size:16px;line-height:21px;color:#6e6e6e;letter-spacing:0.534px;-webkit-text-stroke:0.55px #6e6e6e;transform-origin:0 50%;transform:scaleX(1.03);">Результат</span>
<svg class="b" style="left:1338px;top:514px;" width="24" height="24" viewBox="1338 514 24 24"><g stroke="#222" stroke-width="1.4" fill="none" stroke-linecap="round" stroke-linejoin="round"><path d="M1347.8 532.2 A7 7 0 1 1 1355.9 522.3"/><path d="M1356.4 518.3 V523.6 L1351.2 522.5"/></g><g fill="#222"><circle cx="1355.9" cy="527.5" r="0.85"/><circle cx="1354.1" cy="530.5" r="0.85"/><circle cx="1351.1" cy="532.3" r="0.85"/></g></svg>
<span class="t" style="left:1369.30px;top:514.36px;font-size:16px;line-height:21px;color:#1f1f1f;letter-spacing:0.348px;-webkit-text-stroke:0.35px #1f1f1f;transform-origin:0 50%;transform:scaleX(1.06);">Догрузить ещё</span>
<svg class="b" style="left:1510px;top:514px;" width="26" height="24" viewBox="1510 514 26 24"><g stroke="#222" stroke-width="1.4" fill="none" stroke-linecap="round" stroke-linejoin="round"><path d="M1520.2 532.2 A7 7 0 1 1 1528.3 522.3"/><path d="M1528.7 518.3 V523.6 L1523.5 522.5"/><path d="M1523.6 528.5 L1527 532.2 L1532.4 526.3" stroke-width="1.6"/></g></svg>
<span class="t" style="left:1546.00px;top:514.36px;font-size:16px;line-height:21px;color:#1f1f1f;letter-spacing:0.370px;-webkit-text-stroke:0.35px #1f1f1f;transform-origin:0 50%;transform:scaleX(1.06);">Догрузить всё</span>
<svg class="b" style="left:1682px;top:514px;" width="22" height="24" viewBox="1682 514 22 24"><g stroke="#222" stroke-width="1.4" fill="none" stroke-linecap="round" stroke-linejoin="round"><path d="M1685.5 522.2 V519.7 Q1685.5 517.5 1687.7 517.5 H1698.2 Q1700.4 517.5 1700.4 519.7 V522.2"/><path d="M1693 521.8 V532.2" stroke-width="1.6" stroke-linecap="butt" stroke="#444"/><path d="M1688.9 528.3 L1693 532.5 L1697.1 528.3"/></g></svg>
<span class="t" style="left:1714.00px;top:514.36px;font-size:16px;line-height:21px;color:#1f1f1f;letter-spacing:0.248px;-webkit-text-stroke:0.35px #1f1f1f;transform-origin:0 50%;transform:scaleX(1.05);">Скачать .xlsx</span>
<div class="b" style="left:705px;top:546px;width:1138px;height:364.5px;box-sizing:border-box;border:1px solid #5a5a5a;border-radius:12px;background:#fff;"></div>
<div class="b" style="left:722px;top:559px;width:1092px;height:343px;overflow:hidden;">
<div class="b" style="left:0px;top:0px;width:1092px;height:31px;background:#f1f2f5;"></div>
<div class="b" style="left:0px;top:31px;width:1092px;height:1px;background:#cfcfcf;"></div>
<div class="b" style="left:0px;top:78px;width:1092px;height:1px;background:#cfcfcf;"></div>
<div class="b" style="left:0px;top:125px;width:1092px;height:1px;background:#cfcfcf;"></div>
<div class="b" style="left:0px;top:172px;width:1092px;height:1px;background:#cfcfcf;"></div>
<div class="b" style="left:0px;top:219px;width:1092px;height:1px;background:#cfcfcf;"></div>
<div class="b" style="left:0px;top:266px;width:1092px;height:1px;background:#cfcfcf;"></div>
<div class="b" style="left:0px;top:313px;width:1092px;height:1px;background:#cfcfcf;"></div>
<div class="b" style="left:0px;top:360px;width:1092px;height:1px;background:#cfcfcf;"></div>
<div class="b" style="left:97px;top:0px;width:1px;height:343px;background:#cfcfcf;"></div>
<div class="b" style="left:243px;top:0px;width:1px;height:343px;background:#cfcfcf;"></div>
<div class="b" style="left:399px;top:0px;width:1px;height:343px;background:#cfcfcf;"></div>
<div class="b" style="left:597px;top:0px;width:1px;height:343px;background:#cfcfcf;"></div>
<div class="b" style="left:750px;top:0px;width:1px;height:343px;background:#cfcfcf;"></div>
<div class="b" style="left:863px;top:0px;width:1px;height:343px;background:#cfcfcf;"></div>
<div class="b" style="left:974px;top:0px;width:1px;height:343px;background:#cfcfcf;"></div>
<div class="b" style="left:66px;top:6px;width:19px;height:19px;background:#f4f5f7;box-shadow:0 3px 12px rgba(0,0,0,0.13);"></div>
<div class="b" style="left:70px;top:17px;width:9px;height:1.5px;background:#b9b9bd;"></div>
<div class="b" style="left:212px;top:6px;width:19px;height:19px;background:#f4f5f7;box-shadow:0 3px 12px rgba(0,0,0,0.13);"></div>
<div class="b" style="left:216px;top:17px;width:9px;height:1.5px;background:#b9b9bd;"></div>
<div class="b" style="left:368px;top:6px;width:19px;height:19px;background:#f4f5f7;box-shadow:0 3px 12px rgba(0,0,0,0.13);"></div>
<div class="b" style="left:372px;top:17px;width:9px;height:1.5px;background:#b9b9bd;"></div>
<div class="b" style="left:566px;top:6px;width:19px;height:19px;background:#f4f5f7;box-shadow:0 3px 12px rgba(0,0,0,0.13);"></div>
<div class="b" style="left:570px;top:17px;width:9px;height:1.5px;background:#b9b9bd;"></div>
<div class="b" style="left:719px;top:6px;width:19px;height:19px;background:#f4f5f7;box-shadow:0 3px 12px rgba(0,0,0,0.13);"></div>
<div class="b" style="left:723px;top:17px;width:9px;height:1.5px;background:#b9b9bd;"></div>
<div class="b" style="left:832px;top:6px;width:19px;height:19px;background:#f4f5f7;box-shadow:0 3px 12px rgba(0,0,0,0.13);"></div>
<div class="b" style="left:836px;top:17px;width:9px;height:1.5px;background:#b9b9bd;"></div>
<div class="b" style="left:943px;top:6px;width:19px;height:19px;background:#f4f5f7;box-shadow:0 3px 12px rgba(0,0,0,0.13);"></div>
<div class="b" style="left:947px;top:17px;width:9px;height:1.5px;background:#b9b9bd;"></div>
<div class="b" style="left:1091px;top:6px;width:19px;height:19px;background:#f4f5f7;box-shadow:0 3px 12px rgba(0,0,0,0.13);"></div>
<div class="b" style="left:1095px;top:17px;width:9px;height:1.5px;background:#b9b9bd;"></div>
<span class="t" style="left:12.50px;top:6.25px;font-size:14px;line-height:18px;color:#666;letter-spacing:0.131px;">id</span>
<span class="t" style="left:110.00px;top:6.25px;font-size:14px;line-height:18px;color:#666;letter-spacing:0.317px;">currency_code</span>
<span class="t" style="left:256.00px;top:6.25px;font-size:14px;line-height:18px;color:#666;letter-spacing:0.431px;">marketing_price</span>
<span class="t" style="left:412.80px;top:6.25px;font-size:14px;line-height:18px;color:#666;letter-spacing:0.314px;">marketing_seller_price</span>
<span class="t" style="left:610.50px;top:6.25px;font-size:14px;line-height:18px;color:#666;letter-spacing:0.223px;">min_ozon_price</span>
<span class="t" style="left:762.70px;top:6.25px;font-size:14px;line-height:18px;color:#666;letter-spacing:0.342px;">min_price</span>
<span class="t" style="left:876.30px;top:6.25px;font-size:14px;line-height:18px;color:#666;letter-spacing:0.464px;">old_price</span>
<span class="t" style="left:987.40px;top:6.25px;font-size:14px;line-height:18px;color:#666;letter-spacing:0.387px;">premium_price</span>
<span class="t" style="left:12.00px;top:47.15px;font-size:14px;line-height:18px;color:#383838;letter-spacing:0.630px;transform-origin:0 50%;transform:scaleX(1.08);">69432557</span>
<span class="t" style="left:109.60px;top:47.15px;font-size:14px;line-height:18px;color:#383838;letter-spacing:-0.650px;">RUB</span>
<span class="t" style="left:12.00px;top:94.15px;font-size:14px;line-height:18px;color:#383838;letter-spacing:0.550px;transform-origin:0 50%;transform:scaleX(1.08);">69432561</span>
<span class="t" style="left:109.60px;top:94.15px;font-size:14px;line-height:18px;color:#383838;letter-spacing:-0.650px;">RUB</span>
<span class="t" style="left:256.00px;top:94.15px;font-size:14px;line-height:18px;color:#383838;letter-spacing:0.524px;transform-origin:0 50%;transform:scaleX(1.08);">250.0000</span>
<span class="t" style="left:413.10px;top:94.15px;font-size:14px;line-height:18px;color:#383838;letter-spacing:0.524px;transform-origin:0 50%;transform:scaleX(1.08);">250.0000</span>
<span class="t" style="left:12.00px;top:141.15px;font-size:14px;line-height:18px;color:#383838;letter-spacing:0.630px;transform-origin:0 50%;transform:scaleX(1.08);">69432565</span>
<span class="t" style="left:109.60px;top:141.15px;font-size:14px;line-height:18px;color:#383838;letter-spacing:-0.650px;">RUB</span>
<span class="t" style="left:256.00px;top:141.15px;font-size:14px;line-height:18px;color:#383838;letter-spacing:0.445px;transform-origin:0 50%;transform:scaleX(1.08);">45.0000</span>
<span class="t" style="left:413.10px;top:141.15px;font-size:14px;line-height:18px;color:#383838;letter-spacing:0.445px;transform-origin:0 50%;transform:scaleX(1.08);">45.0000</span>
<span class="t" style="left:12.00px;top:188.15px;font-size:14px;line-height:18px;color:#383838;letter-spacing:0.630px;transform-origin:0 50%;transform:scaleX(1.08);">69432569</span>
<span class="t" style="left:109.60px;top:188.15px;font-size:14px;line-height:18px;color:#383838;letter-spacing:-0.650px;">RUB</span>
<span class="t" style="left:256.00px;top:188.15px;font-size:14px;line-height:18px;color:#383838;letter-spacing:0.524px;transform-origin:0 50%;transform:scaleX(1.08);">500.0000</span>
<span class="t" style="left:413.10px;top:188.15px;font-size:14px;line-height:18px;color:#383838;letter-spacing:0.524px;transform-origin:0 50%;transform:scaleX(1.08);">500.0000</span>
<span class="t" style="left:12.00px;top:235.15px;font-size:14px;line-height:18px;color:#383838;letter-spacing:0.630px;transform-origin:0 50%;transform:scaleX(1.08);">69432573</span>
<span class="t" style="left:109.60px;top:235.15px;font-size:14px;line-height:18px;color:#383838;letter-spacing:-0.650px;">RUB</span>
<span class="t" style="left:256.00px;top:235.15px;font-size:14px;line-height:18px;color:#383838;letter-spacing:0.524px;transform-origin:0 50%;transform:scaleX(1.08);">500.0000</span>
<span class="t" style="left:413.10px;top:235.15px;font-size:14px;line-height:18px;color:#383838;letter-spacing:0.524px;transform-origin:0 50%;transform:scaleX(1.08);">500.0000</span>
<span class="t" style="left:12.00px;top:282.15px;font-size:14px;line-height:18px;color:#383838;letter-spacing:0.630px;transform-origin:0 50%;transform:scaleX(1.08);">77252542</span>
<span class="t" style="left:109.60px;top:282.15px;font-size:14px;line-height:18px;color:#383838;letter-spacing:-0.650px;">RUB</span>
<span class="t" style="left:256.00px;top:282.15px;font-size:14px;line-height:18px;color:#383838;letter-spacing:0.445px;transform-origin:0 50%;transform:scaleX(1.08);">95.0000</span>
<span class="t" style="left:413.10px;top:282.15px;font-size:14px;line-height:18px;color:#383838;letter-spacing:0.524px;transform-origin:0 50%;transform:scaleX(1.08);">100.0000</span>
<span class="t" style="left:12.00px;top:329.15px;font-size:14px;line-height:18px;color:#383838;letter-spacing:0.630px;transform-origin:0 50%;transform:scaleX(1.08);">77252546</span>
<span class="t" style="left:109.60px;top:329.15px;font-size:14px;line-height:18px;color:#383838;letter-spacing:-0.650px;">RUB</span>
<span class="t" style="left:256.00px;top:329.15px;font-size:14px;line-height:18px;color:#383838;letter-spacing:0.445px;transform-origin:0 50%;transform:scaleX(1.08);">48.0000</span>
<span class="t" style="left:413.10px;top:329.15px;font-size:14px;line-height:18px;color:#383838;letter-spacing:0.445px;transform-origin:0 50%;transform:scaleX(1.08);">50.0000</span>
</div>
<div class="b" style="left:1825px;top:557px;width:7.2px;height:49px;background:#c9c9c9;"></div>
<div class="b" style="left:725.7px;top:902.3px;width:525.3px;height:7.4px;background:#c9c9c9;"></div>
<div class="b" style="left:0px;top:0px;width:343px;height:932px;background:#24242e;"></div>
<div class="b" style="left:343px;top:0px;width:1px;height:932px;background:#15151d;"></div>
<div class="b" style="left:344px;top:0px;width:1px;height:932px;background:#fff;"></div>
<div class="b" style="left:30px;top:493px;width:285px;height:54px;background:#161620;border-radius:14px;"></div>
<span class="t" id="krds" style="left:39.4px;top:32.9px;font-size:18px;line-height:26px;font-weight:700;color:#fff;transform-origin:0 50%;transform:scaleX(2.03);letter-spacing:0.3px;">krds</span>
<svg class="b" style="left:122px;top:32px;" width="26" height="26" viewBox="122 32 26 26"><path d="M135.45 34.1 L145.5 38.8 V52.3 L135.45 56 L124.7 52.3 V39.2 Z" fill="#fff"/><g stroke="#24242e" stroke-width="1.05" fill="none" stroke-linecap="round" stroke-linejoin="round"><path d="M125.6 39.7 Q127 41.2 128.4 39.9 C129.6 38.4 133.2 38.3 134.3 40.4 L130.4 41.2 L135.1 43.5"/><path d="M135.1 43.5 L138.2 42.2 C138 44 138.3 45 139.6 45 C141.6 45 142.9 43.4 142.6 40.6 L144.6 39.6"/><path d="M135.3 43.5 V46.6 C133 46.4 131.7 47.4 131.7 49 C131.7 50.6 133 51.6 135.2 51.3"/><path d="M135.4 46.6 V55.6" stroke-width="1.3" stroke="#3a3a44"/></g></svg>
<span class="t" id="lg1" style="left:148.8px;top:24.5px;font-size:19.2px;line-height:24px;font-weight:700;color:#fff;-webkit-text-stroke:0.7px #fff;transform-origin:0 50%;transform:scaleX(0.63);">ЭЛЕКТРОННАЯ</span>
<span class="t" id="lg2" style="left:148.8px;top:41.5px;font-size:18.8px;line-height:24px;font-weight:700;color:#fff;-webkit-text-stroke:0.7px #fff;transform-origin:0 50%;transform:scaleX(0.695);">КОММЕРЦИЯ</span>
<svg class="b" style="left:274px;top:33px;" width="24" height="24" viewBox="0 0 24 24"><path d="M22.5 12 H2 M11.5 2 L1.6 12 L11.5 22" stroke="#fff" stroke-width="2.2" fill="none" stroke-linecap="round" stroke-linejoin="round"/></svg>
<span class="t" style="left:77.80px;top:134.35px;font-size:14px;line-height:18px;color:#d8d8dc;letter-spacing:0.539px;-webkit-text-stroke:0.5px #d8d8dc;">Сводная аналитика</span>
<span class="t" style="left:77.80px;top:188.35px;font-size:14px;line-height:18px;color:#d8d8dc;letter-spacing:0.845px;-webkit-text-stroke:0.5px #d8d8dc;">Аналитический конструктор</span>
<span class="t" style="left:77.80px;top:242.35px;font-size:14px;line-height:18px;color:#d8d8dc;letter-spacing:0.624px;-webkit-text-stroke:0.5px #d8d8dc;">Управление показателями</span>
<span class="t" style="left:77.80px;top:296.35px;font-size:14px;line-height:18px;color:#d8d8dc;letter-spacing:0.818px;-webkit-text-stroke:0.5px #d8d8dc;">Мониторинг загрузок</span>
<span class="t" style="left:77.80px;top:350.35px;font-size:14px;line-height:18px;color:#d8d8dc;letter-spacing:0.715px;-webkit-text-stroke:0.5px #d8d8dc;">Модель данных</span>
<span class="t" style="left:77.80px;top:404.35px;font-size:14px;line-height:18px;color:#d8d8dc;letter-spacing:0.729px;-webkit-text-stroke:0.5px #d8d8dc;">Загрузка данных</span>
<span class="t" style="left:77.80px;top:458.35px;font-size:14px;line-height:18px;color:#d8d8dc;letter-spacing:0.575px;-webkit-text-stroke:0.5px #d8d8dc;">План работы</span>
<span class="t" style="left:77.80px;top:512.35px;font-size:14px;line-height:18px;color:#fff;letter-spacing:0.529px;-webkit-text-stroke:0.5px #fff;">Работа с данными</span>
<svg class="b" style="left:40px;top:128px;" width="36" height="28" viewBox="40 128 36 28"><g stroke="#c8c8cc" stroke-width="1.25" fill="none" stroke-linejoin="miter"><path d="M60.1 141.6 L52.4 133.9 L44.6 141.9 H50.3 V149.8 H54.5 V141.9 H60"/><path d="M60 141.9 V134 H64 V141.8 H69.5 L61.9 149.9 L54.6 142.2"/></g></svg>
<svg class="b" style="left:44px;top:184px;" width="26" height="24" viewBox="44 184 26 24"><rect x="48.3" y="187.7" width="17.4" height="16.8" stroke="#c8c8cc" stroke-width="1.2" fill="none"/><circle cx="57" cy="196.1" r="4.3" stroke="#c8c8cc" stroke-width="1.2" fill="none"/></svg>
<svg class="b" style="left:44px;top:238px;" width="28" height="24" viewBox="44 238 28 24"><g stroke="#c8c8cc" stroke-width="1.25" fill="none"><circle cx="50.4" cy="244.1" r="2.65"/><circle cx="63.4" cy="244.1" r="2.65"/><circle cx="56.8" cy="255.8" r="2.65"/><path d="M53.1 244.1 H60.7 M62.1 246.4 L58.1 253.5"/></g></svg>
<svg class="b" style="left:44px;top:290px;" width="28" height="28" viewBox="44 290 28 28"><g fill="none"><path d="M54.2 296.5 H52 Q50 296.5 50 298.5 V311 Q50 313 52 313 H62 Q64 313 64 311 V298.5 Q64 296.5 62 296.5 H59.8" stroke="#a9a9ae" stroke-width="1.7"/><path d="M55.2 294.6 H58.8 L60.2 296.5 L58.8 298.4 H55.2 L53.8 296.5 Z" stroke="#b4b4b8" stroke-width="1.3" stroke-linejoin="round"/></g></svg>
<svg class="b" style="left:42px;top:346px;" width="30" height="24" viewBox="42 346 30 24"><g stroke="#c8c8cc" stroke-width="1.25" fill="none"><rect x="52" y="349.6" width="8.4" height="5.6" rx="1.4"/><rect x="45.6" y="360.8" width="8.5" height="5.7" rx="1.4"/><rect x="58.9" y="360.8" width="8.6" height="5.7" rx="1.4"/><path d="M56.4 355.4 V358" stroke-width="1.1"/><path d="M49.6 360.6 V359.4 Q49.6 358 51 358 H62.2 Q63.6 358 63.6 359.4 V360.6" stroke="#a9a9ae" stroke-width="1.6"/></g></svg>
<svg class="b" style="left:44px;top:400px;" width="28" height="24" viewBox="44 400 28 24"><g stroke="#c8c8cc" stroke-width="1.25" fill="none" stroke-linecap="round" stroke-linejoin="round"><path d="M57 415.4 V404.4" stroke="#b4b4b8" stroke-width="1.7" stroke-linecap="butt"/><path d="M52.8 408.8 L57 404.4 L61.2 408.8"/><path d="M49.5 414.4 V417.4 Q49.5 419.5 51.6 419.5 H62.4 Q64.5 419.5 64.5 417.4 V414.4"/></g></svg>
<svg class="b" style="left:44px;top:454px;" width="26" height="24" viewBox="44 454 26 24"><g fill="none"><rect x="48.6" y="459" width="16.8" height="15.5" rx="1.6" stroke="#b0b0b5" stroke-width="1.3"/><path d="M48 459.6 Q48 458.4 49.4 458.4 H64.6 Q66 458.4 66 459.6 V462.8 H48 Z" fill="#c8c8cc"/><path d="M51.5 456.7 V459 M62.5 456.7 V459" stroke="#c8c8cc" stroke-width="1.2"/></g></svg>
<svg class="b" style="left:42px;top:504px;" width="30" height="32" viewBox="42 504 30 32"><g stroke="#fff" stroke-width="1.45" fill="none"><ellipse cx="56.4" cy="510.8" rx="11.7" ry="3.35"/><path d="M44.7 510.8 V528.2 M68.1 510.8 V521.5"/><path d="M44.7 515.6 C44.7 518.2 50 520 56.4 520 C62.8 520 68.1 518.2 68.1 515.6"/><path d="M44.7 521.4 C44.7 523.4 48 525 53 525.6"/><path d="M44.7 527.4 C44.7 529.6 48 531 53.4 531.6"/><rect x="53.3" y="521.9" width="16.1" height="10.5" rx="2" fill="#161620"/></g><text x="61.2" y="530.1" font-family="Liberation Sans, sans-serif" font-weight="700" font-size="7.8" fill="#fff" text-anchor="middle" textLength="12.2" lengthAdjust="spacingAndGlyphs">SQL</text></svg>
</body></html>
